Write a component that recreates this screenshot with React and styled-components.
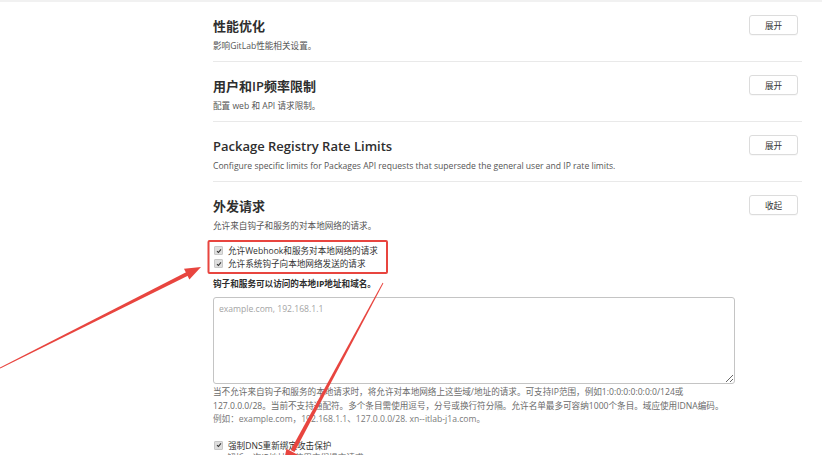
import React from "react";
import styled, { createGlobalStyle } from "styled-components";

const Global = createGlobalStyle`
  html, body { margin: 0; padding: 0; background: #fff; }
  body {
    font-family: "Open Sans", "Noto Sans CJK SC", sans-serif;
    color: #333;
    overflow: hidden;
  }
`;

const Page = styled.div`
  position: relative;
  width: 822px;
  height: 455px;
  overflow: hidden;
  border-top: 2px solid #f1f1f1;
  box-sizing: border-box;
`;

const Column = styled.div`
  margin-left: 213px;
  width: 589px;
`;

const Section = styled.section`
  border-bottom: ${(p) => (p.$last ? "none" : "1px solid #e9e9e9")};
  padding-bottom: ${(p) => (p.$last ? "0" : "9px")};
`;

const Header = styled.div`
  display: flex;
  justify-content: space-between;
  align-items: flex-start;
  padding: 16px 4px 0 0;
`;

const Titles = styled.div`
  display: flex;
  flex-direction: column;
`;

const Title = styled.h4`
  margin: 0;
  font-size: 13px;
  line-height: 16px;
  font-weight: 600;
  color: #2e2e2e;
  white-space: nowrap;
`;

const Desc = styled.p`
  margin: 6px 0 0;
  font-size: 8.6px;
  line-height: 12px;
  color: #555;
  white-space: nowrap;
`;

const ToggleButton = styled.button`
  margin-top: -3px;
  width: 49px;
  height: 20px;
  border: 1px solid #dcdcdc;
  border-radius: 3px;
  background: #fff;
  font-family: inherit;
  font-size: 8.6px;
  color: #333;
  padding: 0;
  box-shadow: 0 1px 1px rgba(0, 0, 0, 0.03);
`;

const Body = styled.div`
  display: flex;
  flex-direction: column;
`;

const CheckGroup = styled.div`
  margin-top: 12px;
  display: flex;
  flex-direction: column;
`;

const CheckRow = styled.label`
  display: flex;
  align-items: center;
  gap: 5px;
  height: 13px;
  padding-left: 1px;
  font-size: 8.6px;
  color: #333;
  white-space: nowrap;
`;

const Box = styled.span`
  width: 7px;
  height: 7px;
  border-radius: 1px;
  background: #dedede;
  border: 0.5px solid #c8c8c8;
  display: inline-flex;
  align-items: center;
  justify-content: center;
  flex: none;
`;

const FieldLabel = styled.div`
  margin-top: 8px;
  font-size: 8.6px;
  line-height: 13px;
  font-weight: 700;
  color: #2e2e2e;
  white-space: nowrap;
`;

const Area = styled.textarea`
  margin-top: 6px;
  width: 522px;
  height: 87px;
  box-sizing: border-box;
  border: 1px solid #c4c4c4;
  border-radius: 3px;
  padding: 5px 5px;
  font-family: inherit;
  font-size: 8.6px;
  resize: vertical;
  &::placeholder { color: #a4a4a4; }
`;

const Help = styled.div`
  margin-top: 2px;
  display: flex;
  flex-direction: column;
  font-size: 8.6px;
  line-height: 13.5px;
  color: ${(p) => p.$color || "#6b6b6b"};
`;

const HelpLine = styled.span`
  white-space: nowrap;
  color: ${(p) => p.$light ? "#7a7a7a" : "inherit"};
`;

const SubHelp = styled.div`
  padding-left: 14px;
  font-size: 8.6px;
  line-height: 13px;
  color: #6b6b6b;
  white-space: nowrap;
`;

const Overlay = styled.svg`
  position: absolute;
  left: 0;
  top: -2px;
  width: 822px;
  height: 455px;
  pointer-events: none;
`;

const Check = () => (
  <Box>
    <svg width="6" height="6" viewBox="0 0 6 6">
      <path d="M1 3.2 L2.4 4.5 L5 1.4" fill="none" stroke="#333" strokeWidth="1.1" />
    </svg>
  </Box>
);

const sections = [
  { title: "性能优化", desc: "影响GitLab性能相关设置。" },
  { title: "用户和IP频率限制", desc: "配置 web 和 API 请求限制。" },
  {
    title: "Package Registry Rate Limits",
    desc: "Configure specific limits for Packages API requests that supersede the general user and IP rate limits.",
  },
];

export default function App() {
  return (
    <>
      <Global />
      <Page>
        <Column>
          {sections.map((s) => (
            <Section key={s.title}>
              <Header>
                <Titles>
                  <Title>{s.title}</Title>
                  <Desc>{s.desc}</Desc>
                </Titles>
                <ToggleButton>展开</ToggleButton>
              </Header>
            </Section>
          ))}
          <Section $last>
            <Header>
              <Titles>
                <Title>外发请求</Title>
                <Desc>允许来自钩子和服务的对本地网络的请求。</Desc>
              </Titles>
              <ToggleButton>收起</ToggleButton>
            </Header>
            <Body>
              <CheckGroup>
                <CheckRow><Check />允许Webhook和服务对本地网络的请求</CheckRow>
                <CheckRow><Check />允许系统钩子向本地网络发送的请求</CheckRow>
              </CheckGroup>
              <FieldLabel>钩子和服务可以访问的本地IP地址和域名。</FieldLabel>
              <Area placeholder="example.com, 192.168.1.1" />
              <Help>
                <HelpLine>当不允许来自钩子和服务的本地请求时，将允许对本地网络上这些域/地址的请求。可支持IP范围，例如1:0:0:0:0:0:0:0/124或</HelpLine>
                <HelpLine>127.0.0.0/28。当前不支持通配符。多个条目需使用逗号，分号或换行符分隔。允许名单最多可容纳1000个条目。域应使用IDNA编码。</HelpLine>
                <HelpLine $light>例如：example.com，192.168.1.1、127.0.0.0/28. xn--itlab-j1a.com。</HelpLine>
              </Help>
              <CheckGroup>
                <CheckRow><Check />强制DNS重新绑定攻击保护</CheckRow>
              </CheckGroup>
              <SubHelp>解析一次IP地址并使用它们提交请求</SubHelp>
            </Body>
          </Section>
        </Column>
        <Overlay viewBox="0 0 822 455">
          <rect x="208.5" y="241" width="178.5" height="32" fill="none" stroke="#e8453f" strokeWidth="2" rx="1" />
          <polygon
            fill="#e8453f"
            points="-0.2,367.6 0.2,368.4 188.4,275.6 186.6,272.0"
          />
          <polygon fill="#e8453f" points="201,267 189.4,279.6 184.0,268.8" />
          <polygon
            fill="#e8453f"
            points="383.4,283.2 382.6,282.8 290.7,450.1 294.5,452.1"
          />
          <polygon fill="#e8453f" points="298.8,455.3 286.4,448.7 282.2,471" />
        </Overlay>
      </Page>
    </>
  );
}
